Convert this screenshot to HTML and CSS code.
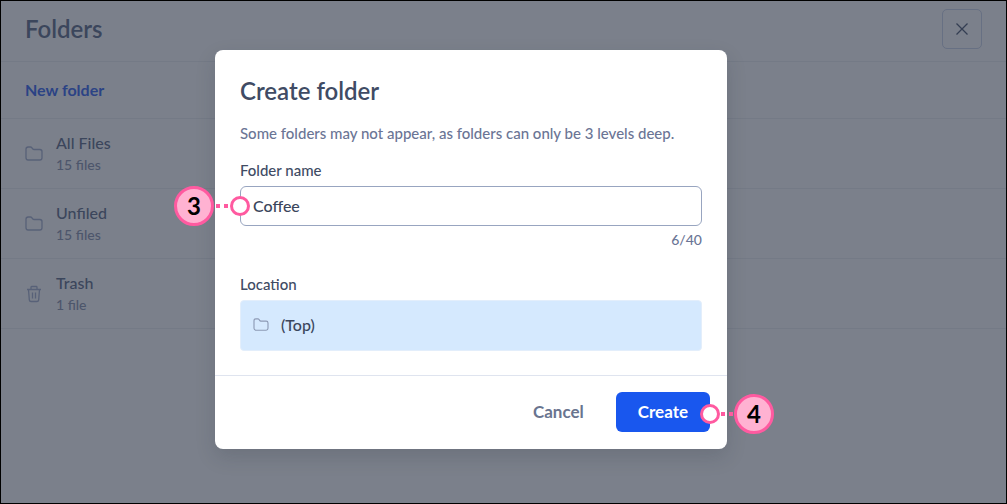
FILE: index.html
```html
<!DOCTYPE html>
<html lang="en">
<head>
<meta charset="utf-8">
<meta name="viewport" content="width=device-width, initial-scale=1">
<title>Folders</title>
<link rel="stylesheet" href="styles.css">
</head>
<body>
<svg class="symbols" aria-hidden="true">
  <symbol id="folder" viewBox="0 0 18 16"><path d="M1 3.2Q1 1 3.2 1H5.4Q6.3 1 6.8 1.7L7.4 2.7Q7.9 3.5 8.9 3.5H14.8Q17 3.5 17 5.7V11.8Q17 14 14.8 14H3.2Q1 14 1 11.8Z"/></symbol>
  <symbol id="trash" viewBox="0 0 18 18"><path d="M2 4.5H16M6 4.5V2.2Q6 1.5 6.7 1.5H11.3Q12 1.5 12 2.2V4.5M3.5 4.5L4.3 14.8Q4.5 16.5 6 16.5H12Q13.5 16.5 13.7 14.8L14.5 4.5M7.5 7.5V13.5M10.5 7.5V13.5"/></symbol>
</svg>
<div class="page">
  <header class="header">
    <h1 class="title">Folders</h1>
    <button class="close" type="button" aria-label="Close"><svg width="14" height="14" viewBox="0 0 14 14"><path d="M1.5 1.5L12.5 12.5M12.5 1.5L1.5 12.5"/></svg></button>
  </header>
  <div class="new-row"><button class="new-folder" type="button">New folder</button></div>
  <ul class="list">
    <li class="item"><svg class="icon icon-folder"><use href="#folder"/></svg><div><div class="name">All Files</div><div class="count">15 files</div></div></li>
    <li class="item"><svg class="icon icon-folder"><use href="#folder"/></svg><div><div class="name">Unfiled</div><div class="count">15 files</div></div></li>
    <li class="item"><svg class="icon icon-trash"><use href="#trash"/></svg><div><div class="name">Trash</div><div class="count">1 file</div></div></li>
  </ul>
</div>
<div class="overlay">
  <form class="dialog" role="dialog" aria-labelledby="dialog-title">
    <div class="dialog-body">
      <h2 class="dialog-title" id="dialog-title">Create folder</h2>
      <p class="hint">Some folders may not appear, as folders can only be 3 levels deep.</p>
      <label class="label" for="folder-name">Folder name</label>
      <div class="anchor">
        <input class="input" id="folder-name" type="text" maxlength="40" value="Coffee">
        <div class="callout callout-left"><span class="badge">3</span><span class="dashes"><span class="dash"></span><span class="dash"></span></span><span class="ring"></span></div>
      </div>
      <div class="counter">6/40</div>
      <div class="label" id="location-label">Location</div>
      <button class="location" type="button" aria-describedby="location-label"><svg class="icon icon-small"><use href="#folder"/></svg><span>(Top)</span></button>
    </div>
    <footer class="footer">
      <button class="button cancel" type="button">Cancel</button>
      <div class="anchor">
        <button class="button create" type="submit">Create</button>
        <div class="callout callout-right"><span class="ring"></span><span class="dashes"><span class="dash"></span><span class="dash"></span></span><span class="badge">4</span></div>
      </div>
    </footer>
  </form>
</div>
</body>
</html>
```

FILE: styles.css
```css
* { box-sizing: border-box; }
body {
  margin: 0;
  font-family: Lato, "Open Sans", sans-serif;
  font-size: 16px;
  font-weight: 500;
  line-height: 24px;
  color: #3b465c;
}
button, input { font: inherit; color: inherit; margin: 0; }
button { border: 0; padding: 0; background: none; cursor: pointer; }
.symbols { position: absolute; width: 0; height: 0; }
.page {
  min-height: 100vh;
  background: #7b808b;
  border: 1px solid #000;
}
.header {
  display: flex;
  align-items: center;
  justify-content: space-between;
  padding: 8px 24px 12px;
  border-bottom: 1px solid #747a86;
}
.title { margin: 0; font-size: 24px; line-height: 32px; font-weight: 600; }
.close {
  display: grid;
  place-items: center;
  width: 40px;
  height: 40px;
  border: 1px solid #677083;
  border-radius: 5px;
}
.close svg { fill: none; stroke: #343e53; stroke-width: 1.3; }
.new-row { padding: 16px 24px; border-bottom: 1px solid #747a86; }
.new-folder { display: block; font-weight: 700; color: #2b4385; }
.list { list-style: none; margin: 0; padding: 0; }
.item {
  display: flex;
  align-items: center;
  gap: 13px;
  padding: 13px 24px;
  border-bottom: 1px solid #747a86;
}
.icon { flex: none; fill: none; stroke: #586178; stroke-width: 1.3; }
.icon-folder { width: 18px; height: 16px; }
.icon-trash { width: 18px; height: 18px; }
.name { line-height: 22px; padding-bottom: 1px; }
.count { font-size: 14px; line-height: 20px; color: #4d566b; }
.overlay {
  position: absolute;
  inset: 0;
  display: flex;
  justify-content: center;
  align-items: flex-start;
  padding: 50px 65px 50px 0;
}
.dialog {
  width: 100%;
  max-width: 512px;
  background: #fff;
  border-radius: 8px;
  box-shadow: 0 8px 20px rgba(30, 36, 50, .16);
}
.dialog-body { padding: 24px 25px; }
.dialog-title { margin: 0 0 15px; font-size: 24px; line-height: 34px; font-weight: 600; color: #404b64; }
.hint { margin: 0 0 17px; font-size: 15px; line-height: 20px; color: #6b7595; }
.label { display: block; margin-bottom: 6px; font-size: 15px; line-height: 20px; color: #404b64; }
.anchor { position: relative; }
.input {
  display: block;
  width: 100%;
  height: 40px;
  padding: 0 12px 2px;
  border: 1px solid #98a5c0;
  border-radius: 6px;
  background: #fff;
  color: #3b465c;
}
.counter { margin: 4px 0 24px; text-align: right; font-size: 14px; line-height: 20px; color: #6b7595; }
.location {
  display: flex;
  align-items: center;
  gap: 12px;
  width: 100%;
  height: 51px;
  padding: 0 12px 2px;
  border: 1px solid #e3eefb;
  border-radius: 4px;
  background: #d5e9fe;
}
.icon-small { width: 16px; height: 14px; stroke: #8d9ab5; }
.footer {
  display: flex;
  justify-content: flex-end;
  gap: 10px;
  padding: 16px 17px 17px;
  border-top: 1px solid #dfe4ef;
}
.button { display: block; height: 40px; padding: 0 22px; border-radius: 6px; font-size: 17px; font-weight: 700; }
.cancel { color: #69748f; }
.create { background: #1957ee; color: #fff; }
.callout { position: absolute; top: 50%; display: flex; align-items: center; gap: 2px; transform: translateY(-50%); }
.callout-left { right: calc(100% - 10px); }
.callout-right { top: calc(50% + 2px); left: calc(100% - 10px); gap: 1px; }
.badge {
  display: grid;
  place-items: center;
  width: 40px;
  height: 40px;
  border: 3px solid #ff5aa0;
  border-radius: 50%;
  background: #ffb2d2;
  color: #000;
  font-size: 24px;
  font-weight: 700;
}
.dashes { display: flex; gap: 4px; }
.dash { width: 4px; height: 4px; background: #ff5aa0; }
.ring { width: 20px; height: 20px; border: 3px solid #ff5aa0; border-radius: 50%; background: #fff; }
```
